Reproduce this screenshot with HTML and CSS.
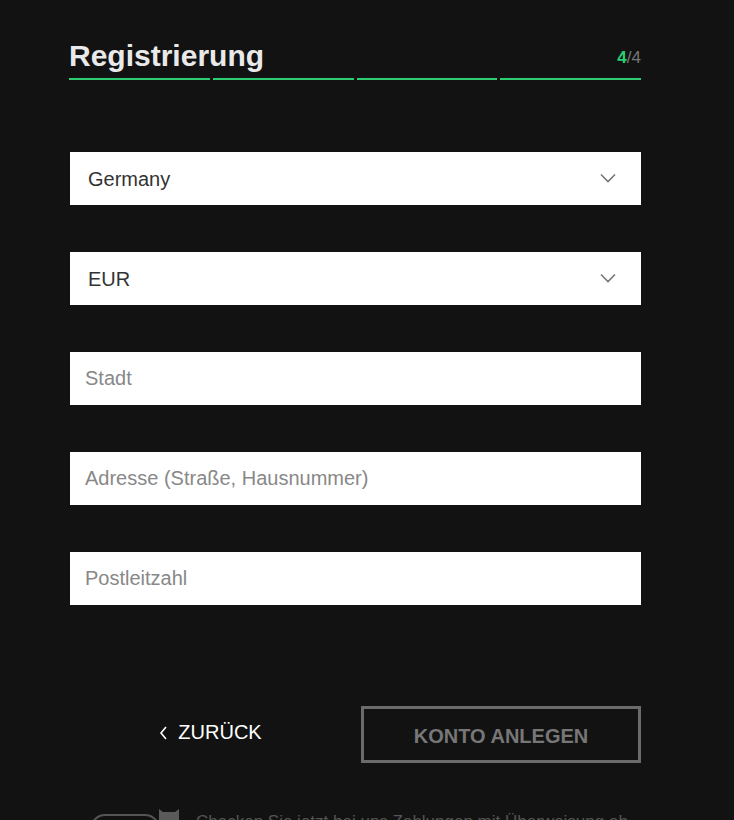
FILE: index.html
```html
<!DOCTYPE html>
<html lang="de">
<head>
    <meta charset="UTF-8">
    <meta name="viewport" content="width=device-width, initial-scale=1.0">
    <title>Registrierung</title>
    <link rel="stylesheet" href="styles.css">
</head>
<body>
    <div class="register-container">
        <div class="register-head">
            <h2>Registrierung</h2>
            <span class="step"><b>4</b>/4</span>
        </div>
        <div class="progress">
            <span></span><span></span><span></span><span></span>
        </div>

        <form id="registerForm">
            <div class="select-box">
                <select name="country">
                    <option>Germany</option>
                </select>
                <svg class="chevron" width="16" height="10" viewBox="0 0 16 10"><path d="M1 1.5 L8 8.5 L15 1.5" fill="none" stroke="#777" stroke-width="1.6"/></svg>
            </div>
            <div class="select-box">
                <select name="currency">
                    <option>EUR</option>
                </select>
                <svg class="chevron" width="16" height="10" viewBox="0 0 16 10"><path d="M1 1.5 L8 8.5 L15 1.5" fill="none" stroke="#777" stroke-width="1.6"/></svg>
            </div>
            <input type="text" name="city" placeholder="Stadt">
            <input type="text" name="address" placeholder="Adresse (Straße, Hausnummer)">
            <input type="text" name="zip" placeholder="Postleitzahl">

            <div class="actions">
                <a href="#" class="back-link">
                    <svg width="10" height="16" viewBox="0 0 10 16"><path d="M7 2 L2 8 L7 14" fill="none" stroke="#fff" stroke-width="1.6"/></svg>
                    ZURÜCK
                </a>
                <button type="submit" class="register-btn">KONTO ANLEGEN</button>
            </div>
        </form>

        <div class="newsletter">
            <span class="toggle"></span>
            <svg class="cat" width="22" height="16" viewBox="0 0 22 16"><path d="M1 16 V2 L5 5 H17 L21 2 V16 Z" fill="#5a5a5a"/></svg>
            <span class="newsletter-text">Checken Sie jetzt bei uns Zahlungen mit Überweisung ab</span>
        </div>
    </div>
</body>
</html>
```

FILE: styles.css
```css
html, body {
    margin: 0;
    background-color: #121212;
    font-family: "Liberation Sans", Arial, sans-serif;
}
body {
    height: 820px;
    overflow: hidden;
}
.register-container {
    width: 571px;
    margin-left: 70px;
    padding-top: 37px;
}
.register-head {
    display: flex;
    justify-content: space-between;
    align-items: flex-end;
    height: 38px;
}
.register-head h2 {
    margin: 0 0 0 -1px;
    font-size: 30px;
    line-height: 38px;
    color: #e9e9e9;
    font-weight: bold;
}
.register-head .step {
    font-size: 17px;
    color: #777;
    line-height: 26px;
    padding-bottom: 4px;
}
.register-head .step b {
    color: #2ecc71;
}
.progress {
    display: flex;
    gap: 3px;
    margin-top: 3px;
    margin-left: -1px;
}
.progress span {
    flex: 1;
    height: 2px;
    background-color: #2ecc71;
}
#registerForm {
    margin-top: 72px;
    display: flex;
    flex-direction: column;
    gap: 47px;
}
.select-box {
    position: relative;
}
.select-box select,
#registerForm input {
    display: block;
    width: 100%;
    height: 53px;
    margin: 0;
    border: none;
    border-radius: 0;
    background-color: #fff;
    font-family: "Liberation Sans", Arial, sans-serif;
    font-size: 20px;
    box-sizing: border-box;
    outline: none;
}
.select-box select {
    appearance: none;
    -webkit-appearance: none;
    padding-left: 18px;
    color: #333;
}
.select-box .chevron {
    position: absolute;
    right: 25px;
    top: 21px;
    pointer-events: none;
}
#registerForm input {
    padding-left: 15px;
    color: #333;
}
#registerForm input::placeholder {
    color: #888;
}
.actions {
    display: flex;
    align-items: center;
    margin-top: 54px;
}
.back-link {
    flex: 1;
    display: flex;
    justify-content: center;
    align-items: center;
    gap: 9px;
    padding-right: 10px;
    padding-bottom: 4px;
    color: #fff;
    font-size: 20px;
    text-decoration: none;
}
.register-btn {
    width: 280px;
    height: 57px;
    background-color: transparent;
    border: 3px solid #6b6b6b;
    color: #777;
    font-family: "Liberation Sans", Arial, sans-serif;
    font-size: 20px;
    font-weight: bold;
    cursor: pointer;
    padding: 3px 0 0;
}
.newsletter {
    display: flex;
    align-items: flex-start;
    margin-top: 44px;
    padding-left: 20px;
}
.toggle {
    flex-shrink: 0;
    width: 70px;
    height: 30px;
    border: 2px solid #555;
    border-radius: 16px;
    margin-top: 7px;
    box-sizing: border-box;
}
.cat {
    flex-shrink: 0;
    margin-left: -2px;
}
.newsletter-text {
    margin-left: 16px;
    margin-top: 5px;
    font-size: 17px;
    color: #555;
    white-space: nowrap;
}
```
